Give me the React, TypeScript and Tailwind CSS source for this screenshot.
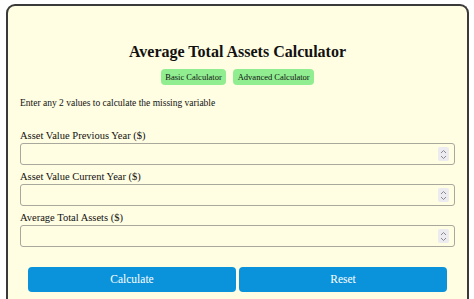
import { useState } from 'react';

const serif = "font-[family-name:'Liberation_Serif','Times_New_Roman',serif]";

const fields = [
  { key: 'prev', label: 'Asset Value Previous Year ($)' },
  { key: 'curr', label: 'Asset Value Current Year ($)' },
  { key: 'avg', label: 'Average Total Assets ($)' },
];

function Spinner() {
  return (
    <span className="pointer-events-none absolute right-[6px] top-1/2 -translate-y-1/2 flex h-[14px] w-[11px] items-center justify-center rounded-[2px] bg-[#ebebf0]">
      <svg width="7" height="11" viewBox="0 0 7 11" fill="none" stroke="#8a8a92" strokeWidth="1">
        <path d="M1 4 L3.5 1.5 L6 4" />
        <path d="M1 7 L3.5 9.5 L6 7" />
      </svg>
    </span>
  );
}

export default function App() {
  const [values, setValues] = useState<Record<string, string>>({ prev: '', curr: '', avg: '' });

  return (
    <div className={`min-h-[299px] bg-white pl-[6px] pr-[5px] pt-[4px] text-[#111] ${serif}`}>
      <div className="h-[300px] rounded-t-[9px] border-2 border-b-0 border-[#3a3a3a] bg-[#fffde2] px-[12px] pt-[36px]">
        <h1 className={`text-center text-[16px] font-bold leading-[20px] ${serif}`}>Average Total Assets Calculator</h1>
        <div className="mt-[7px] flex justify-center gap-[7px]">
          <button className={`h-[16px] rounded-[4px] bg-[#90ee90] px-[4.5px] text-[8.5px] leading-[16px] ${serif}`}>Basic Calculator</button>
          <button className={`h-[16px] rounded-[4px] bg-[#90ee90] px-[4.5px] text-[8.5px] leading-[16px] ${serif}`}>Advanced Calculator</button>
        </div>
        <p className={`mt-[11px] text-[9.5px] leading-[14px] ${serif}`}>Enter any 2 values to calculate the missing variable</p>

        <div className="mt-[19px] flex flex-col gap-[5px]">
          {fields.map((f) => (
            <div key={f.key}>
              <label className={`block text-[10.5px] leading-[14px] ${serif}`}>{f.label}</label>
              <div className="relative">
                <input
                  type="text"
                  value={values[f.key]}
                  onChange={(e) => setValues({ ...values, [f.key]: e.target.value })}
                  className={`block h-[22px] w-full rounded-[3px] border border-[#a8a89c] bg-[#fffde2] px-[4px] text-[11px] outline-none ${serif}`}
                />
                <Spinner />
              </div>
            </div>
          ))}
        </div>

        <div className="mt-[20px] flex gap-[3px] px-[8px]">
          <button className={`h-[25px] flex-1 rounded-[4px] bg-[#0a93da] text-[11.5px] text-white ${serif}`}>Calculate</button>
          <button className={`h-[25px] flex-1 rounded-[4px] bg-[#0a93da] text-[11.5px] text-white ${serif}`}>Reset</button>
        </div>
      </div>
    </div>
  );
}
